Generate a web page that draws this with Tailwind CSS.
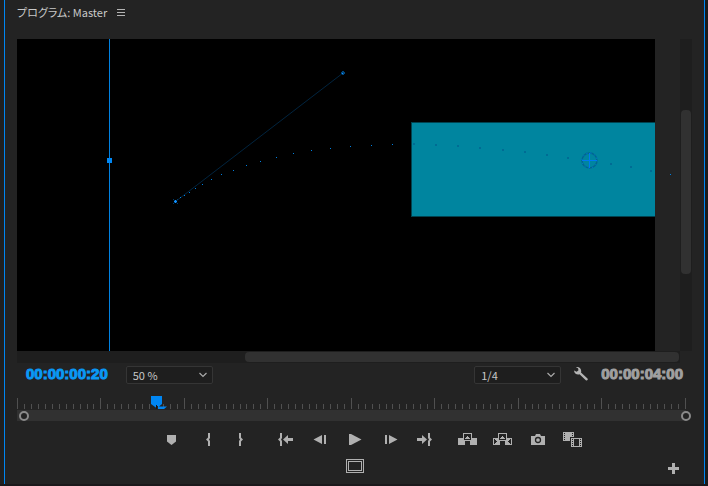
<!DOCTYPE html>
<html lang="ja">
<head>
  <meta charset="UTF-8" />
  <meta name="viewport" content="width=device-width, initial-scale=1.0" />
  <title>プログラム: Master</title>
  <script src="https://cdn.jsdelivr.net/npm/@tailwindcss/browser@4"></script>
</head>
<body class="flex min-h-screen flex-col border-b-2 border-[#1b191b] bg-[#1b1b1b] font-['Noto_Sans_CJK_JP',sans-serif] text-[#b4b4b4]">
  <main class="mr-[3px] flex flex-1 flex-col border-l-4 border-[#202020]">
    <div class="flex-1 border-x border-[#0086f2] bg-[#232323] px-3">

      <!-- Panel title -->
      <header class="flex h-[39px] items-start gap-2.5 pt-1">
        <h1 class="text-[11px] leading-4 text-[#c8c8c8] [font-feature-settings:'palt']">プログラム: Master</h1>
        <button type="button" aria-label="Panel menu" class="mt-[5px]">
          <svg class="block h-2 w-2" viewBox="0 0 8 8" fill="#b4b4b4" shape-rendering="crispEdges">
            <path d="M0 0h8v1H0zM0 3h8v1H0zM0 6h8v1H0z" />
          </svg>
        </button>
      </header>

      <!-- Monitor -->
      <section class="flex" aria-label="Monitor">
        <svg id="monitor" class="block h-auto min-w-0 flex-1" viewBox="0 0 663 312">
          <rect width="638" height="312" fill="#000" />
          <rect x="394" y="83" width="244" height="95" fill="#004350" />
          <rect x="395" y="84" width="243" height="93" fill="#00859f" />
          <path d="M158.500 162.500L326 34" stroke="#00243f" />
          <path d="M92 0h1v312h-1z" fill="#0080e0" />
          <rect x="90" y="119" width="5" height="5" fill="#0086f2" />
          <path d="M156 160l5 5M161 160l-5 5" stroke="#003a68" />
          <path d="M157 162h3v1h-3zM158 161h1v3h-1z" fill="#1090ff" />
          <path d="M324 34h4M326 32v4" stroke="#00467c" stroke-width="2" />
          <path d="M325 34h1v1h-1z" fill="#1090ff" />
          <g id="path-dots"></g>
          <circle cx="572.500" cy="121.500" r="7.500" fill="none" stroke="#006690" stroke-width="1.500" />
          <circle cx="572.500" cy="121.500" r="7.500" fill="none" stroke="#0080e8" stroke-dasharray="1 3" />
          <path d="M565 121h15v1h-15zM572 114h1v15h-1z" fill="#0078f0" />
        </svg>
        <div class="flex w-3 flex-col bg-[#1e1e1e] px-px">
          <div class="flex-[71]"></div>
          <div class="flex-[164] rounded-sm bg-[#313131]"></div>
          <div class="flex-[77]"></div>
        </div>
      </section>
      <div class="mr-3 flex h-3 bg-[#1e1e1e] py-px">
        <div class="flex-[228]"></div>
        <div class="flex-[434] rounded-sm bg-[#313131]"></div>
        <div class="flex-[1]"></div>
      </div>

      <!-- Timecode and view settings -->
      <section class="flex h-[35px] items-start justify-between pt-[3px]">
        <div class="flex items-start gap-[18px] pl-[9px]">
          <time class="font-['Liberation_Sans',sans-serif] text-[15px] leading-4 font-bold text-[#0a98f5] [-webkit-text-stroke:1px]">00:00:00:20</time>
          <div class="relative">
            <select aria-label="Zoom level" class="block h-[18px] w-[87px] appearance-none rounded-xs border border-[#353535] bg-[#1e1e1e] pl-1.5 text-[11px] leading-4 text-[#c8c8c8]">
              <option>50 %</option>
            </select>
            <svg class="pointer-events-none absolute top-1.5 right-1.5 h-1.5 w-2" viewBox="0 0 8 6" fill="none" stroke="#aaa" stroke-width="1.200"><path d="M.5 1L4 4.500 7.500 1" /></svg>
          </div>
        </div>
        <div class="flex items-start gap-3 pr-[9px]">
          <div class="relative">
            <select aria-label="Playback resolution" class="block h-[18px] w-[87px] appearance-none rounded-xs border border-[#353535] bg-[#1e1e1e] pl-1.5 text-[11px] leading-4 text-[#c8c8c8]">
              <option>1/4</option>
            </select>
            <svg class="pointer-events-none absolute top-1.5 right-1.5 h-1.5 w-2" viewBox="0 0 8 6" fill="none" stroke="#aaa" stroke-width="1.200"><path d="M.5 1L4 4.500 7.500 1" /></svg>
          </div>
          <button type="button" aria-label="Settings">
            <svg class="block h-4 w-4" viewBox="0 0 16 16" fill="#b4b4b4">
              <path d="M3 1.200C5.500.5 8 2 8.200 5c0 .6 0 1-.2 1.500l6.500 6c1 1-.5 2.800-1.700 1.800L6.500 8.200C4 9 1.200 7.500 1 4.500l2.700 1.300 1.800-1.600L5 2.300z" />
            </svg>
          </button>
          <time class="font-['Liberation_Sans',sans-serif] text-[15px] leading-4 font-bold text-[#a0a0a0] [-webkit-text-stroke:1px]">00:00:04:00</time>
        </div>
      </section>

      <!-- Time ruler -->
      <section class="relative mr-1.5" aria-label="Time ruler">
        <div id="ruler" class="flex h-[11px] items-end justify-between"></div>
        <svg class="absolute -top-0.5 left-[20%] h-[13px] w-[17px]" viewBox="0 0 17 13">
          <path d="M0 0h11v8L8 10.500h8L13 13H7v-3H5.500v2L0 8z" fill="#0086f2" />
          <path d="M5 9h1v4H5z" fill="#151515" />
        </svg>
        <div class="mt-px flex h-[11px] items-center justify-between bg-[#313131] pl-0.5">
          <button type="button" aria-label="Range start" class="h-2.5 w-2.5 rounded-full border-2 border-[#8a8a8a] bg-[#232323]"></button>
          <button type="button" aria-label="Range end" class="-mr-[5px] h-2.5 w-2.5 rounded-full border-2 border-[#8a8a8a] bg-[#232323]"></button>
        </div>
      </section>

      <!-- Transport -->
      <section class="grid grid-cols-[1fr_auto_1fr] gap-x-2 gap-y-1 pt-2 [&_button]:block [&_svg]:block [&_svg]:h-5 [&_svg]:fill-[#b0b0b0]">
        <div class="flex justify-end">
          <button type="button" aria-label="Add marker"><svg class="w-[35px]" viewBox="0 0 35 20"><path d="M13 6h9v6.500l-4.500 3.500L13 12.500z" /></svg></button>
          <button type="button" aria-label="Mark in"><svg class="w-[35px]" viewBox="0 0 35 20"><path d="M19 4h2v5l-1 1.500 1 1.500v5h-2v-4.500l-2-2 2-2z" /></svg></button>
          <button type="button" aria-label="Mark out"><svg class="w-[35px]" viewBox="0 0 35 20"><path d="M17 4h-2v5l1 1.500-1 1.500v5h2v-4.500l2-2-2-2z" /></svg></button>
        </div>
        <div class="flex">
          <button type="button" aria-label="Go to in"><svg class="w-[35px]" viewBox="0 0 35 20"><path d="M13 4h2v5l-1 1.500 1 1.500v5h-2v-4.500l-2-2 2-2zM16 10.500L21 6v3h5v3h-5v3z" /></svg></button>
          <button type="button" aria-label="Step back"><svg class="w-[35px]" viewBox="0 0 35 20"><path d="M11.500 10.500L20 6v9zM22 6h2v9h-2z" /></svg></button>
          <button type="button" aria-label="Play"><svg class="w-[35px]" viewBox="0 0 35 20"><path d="M12 5h2l10.500 5.500L14 16h-2z" /></svg></button>
          <button type="button" aria-label="Step forward"><svg class="w-[35px]" viewBox="0 0 35 20"><path d="M13 6h2v9h-2zM17 6l8.500 4.500L17 15z" /></svg></button>
          <button type="button" aria-label="Go to out"><svg class="w-[35px]" viewBox="0 0 35 20"><path d="M10 9h5V6l5 4.500-5 4.500v-3h-5zM23 4h-2v5l1 1.500-1 1.500v5h2v-4.500l2-2-2-2z" /></svg></button>
        </div>
        <div class="flex">
          <button type="button" aria-label="Lift"><svg class="w-[35px]" viewBox="0 0 35 20" shape-rendering="crispEdges"><path d="M8 9h7v7H8zM20 9h7v7h-7zM13 4h9v8h-9z" /><path d="M14 5h7v6h-7z" fill="#232323" /><path d="M15 9h5v1h-5zM16 8h3v1h-3zM17 7h1v1h-1z" /></svg></button>
          <button type="button" aria-label="Extract"><svg class="w-[35px]" viewBox="0 0 35 20" shape-rendering="crispEdges"><path d="M8 9h7v7H8zM20 9h7v7h-7zM13 4h9v8h-9z" /><path d="M14 5h7v6h-7z" fill="#232323" /><path d="M15 9h5v1h-5zM16 8h3v1h-3zM17 7h1v1h-1z" /><path d="M9 10h1v1h1v1h1v1h-1v1h-1v1H9zM26 10h-1v1h-1v1h-1v1h1v1h1v1h1z" fill="#232323" /></svg></button>
          <button type="button" aria-label="Export frame"><svg class="w-[35px]" viewBox="0 0 35 20"><path d="M11 7h4l1-2h4l1 2h4v9H11z" /><circle cx="18" cy="11" r="2.500" fill="none" stroke="#232323" stroke-width="1.300" /></svg></button>
          <button type="button" aria-label="Comparison view"><svg class="w-[35px]" viewBox="0 0 35 20" shape-rendering="crispEdges"><path d="M8 3h11v9H8z" /><path d="M9 4h1v1H9zM9 6h1v1H9zM9 8h1v1H9zM9 10h1v1H9zM17 4h1v1h-1zM17 6h1v1h-1zM17 8h1v1h-1z" fill="#232323" /><path d="M15 8h4v1h9v10H15z" fill="#232323" /><path d="M16 9h11v9H16zm3 1v7h5v-7z" fill-rule="evenodd" /><path d="M17 10h1v1h-1zM17 12h1v1h-1zM17 14h1v1h-1zM17 16h1v1h-1zM25 10h1v1h-1zM25 12h1v1h-1zM25 14h1v1h-1zM25 16h1v1h-1z" fill="#232323" /></svg></button>
        </div>
        <button type="button" aria-label="Safe margins" class="col-start-2 justify-self-center"><svg class="w-[35px]" viewBox="0 0 35 20" shape-rendering="crispEdges"><path d="M9 5h18v14H9zm1 1v12h16V6zM11 7h14v10H11zm1 1v8h12V8z" transform="translate(0 -2)" fill-rule="evenodd" /></svg></button>
        <button type="button" aria-label="Button editor" class="mt-1.5 mr-[13px] justify-self-end"><svg class="w-[11px]" viewBox="0 0 11 20" shape-rendering="crispEdges"><path d="M4 4h3v4h4v3H7v4H4v-4H0V8h4z" /></svg></button>
      </section>
    </div>
  </main>

  <script>
    // 8 major divisions, 12 frames each
    const ruler = document.getElementById('ruler');
    for (let i = 0; i <= 96; i++) {
      const tick = document.createElement('span');
      tick.className = i % 12 === 0 ? 'w-px h-[11px] bg-[#505050]' : 'w-px h-[5px] bg-[#505050]';
      ruler.appendChild(tick);
    }

    // one dot per frame of the motion path
    const dots = [
      [163, 158], [167, 156], [172, 153], [178, 149], [185, 145], [194, 140], [204, 135],
      [216, 131], [229, 126], [243, 122], [259, 118], [276, 114], [294, 111], [313, 109],
      [333, 107], [354, 106], [375, 105], [397, 105], [419, 106], [441, 107], [463, 109],
      [486, 111], [508, 113], [530, 116], [551, 119], [594, 125], [614, 128], [634, 132], [653, 135]
    ];
    const group = document.getElementById('path-dots');
    dots.forEach(([x, y]) => {
      const dot = document.createElementNS('http://www.w3.org/2000/svg', 'rect');
      const onClip = x > 390 && x < 638;
      dot.setAttribute('x', onClip ? x - 1 : x);
      dot.setAttribute('y', onClip ? y - 1 : y);
      dot.setAttribute('width', onClip ? 2 : 1);
      dot.setAttribute('height', onClip ? 2 : 1);
      dot.setAttribute('fill', onClip ? '#006c94' : '#0080e0');
      group.appendChild(dot);
    });
  </script>
</body>
</html>
